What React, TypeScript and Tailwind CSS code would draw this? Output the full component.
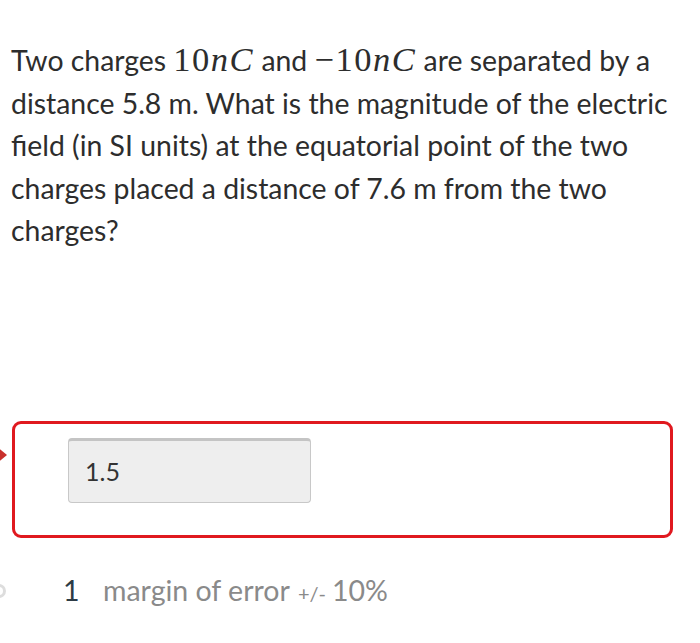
import React from "react";

const M = ({ children }: { children: React.ReactNode }) => (
  <span className="font-['Liberation_Serif','DejaVu_Serif',serif] text-[34.5px] tracking-[1.5px]">{children}</span>
);

export default function App() {
  return (
    <div className="w-[700px] h-[643px] bg-white relative overflow-hidden font-['Lato','Noto_Sans',sans-serif] text-[#2d3b45]">
      <p className="pl-[11px] pt-[38px] text-[28.4px] leading-[42.5px] text-[#2d2d2d] whitespace-nowrap h-[251px] box-border">
        Two charges <M>10<i>nC</i></M> and <M>−10<i>nC</i></M> are separated by a<br />
        distance 5.8 m. What is the magnitude of the electric<br />
        field (in SI units) at the equatorial point of the two<br />
        charges placed a distance of 7.6 m from the two<br />
        charges?
      </p>

      <div className="mt-[170px] ml-[12px] w-[661px] h-[117px] border-[3px] border-[#e0191f] rounded-[9px] relative pt-[14px] pl-[53px]">
        <div className="w-[243px] h-[65px] bg-[#eeeeee] border border-[#c8c8c8] border-t-[3px] border-t-[#c4c4c4] rounded-[4px] flex items-center pl-[16px] text-[25px] text-[#333]">
          1.5
        </div>
      </div>
      <div className="absolute left-[-5px] top-[445px] w-0 h-0 border-y-[10px] border-y-transparent border-l-[12px] border-l-[#c9302c]" />

      <div className="absolute left-[-8px] top-[584px] w-[14px] h-[14px] rounded-full border-[3px] border-[#dddddd]" />
      <div className="mt-[34px] ml-[63px] flex items-baseline text-[28.5px] leading-[36px]">
        <span className="text-[#2d3b45] w-[40px]">1</span>
        <span className="text-[#8a8a8a]">margin of error</span>
        <span className="text-[#8a8a8a] text-[20px] ml-[8px]">+/-</span>
        <span className="text-[#8a8a8a] ml-[6px]">10%</span>
      </div>
    </div>
  );
}
